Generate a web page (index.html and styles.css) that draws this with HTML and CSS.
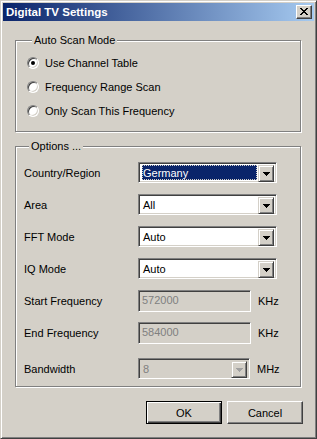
FILE: index.html
```html
<!DOCTYPE html>
<html lang="en">
<head>
    <meta charset="UTF-8">
    <title>Digital TV Settings</title>
    <link rel="stylesheet" href="styles.css">
</head>
<body>
    <div class="window">
        <div class="titlebar">
            <span class="title">Digital TV Settings</span>
            <button class="close" aria-label="Close">
                <svg width="8" height="7" viewBox="0 0 8 7"><path d="M0 0h2v1H0zM6 0h2v1H6zM1 1h2v1H1zM5 1h2v1H5zM2 2h4v1H2zM3 3h2v1H3zM2 4h4v1H2zM1 5h2v1H1zM5 5h2v1H5zM0 6h2v1H0zM6 6h2v1H6z" fill="#000"/></svg>
            </button>
        </div>

        <div class="content">
            <fieldset class="group scan">
                <legend>Auto Scan Mode</legend>
                <div class="radio-row"><span class="radio checked"></span>Use Channel Table</div>
                <div class="radio-row"><span class="radio"></span>Frequency Range Scan</div>
                <div class="radio-row"><span class="radio"></span>Only Scan This Frequency</div>
            </fieldset>

            <fieldset class="group options">
                <legend>Options ...</legend>
                <div class="row">
                    <span class="label">Country/Region</span>
                    <div class="combo">
                        <span class="value selected">Germany</span>
                        <span class="drop"><svg width="7" height="4" viewBox="0 0 7 4"><path d="M0 0h7v1H0zM1 1h5v1H1zM2 2h3v1H2zM3 3h1v1H3z"/></svg></span>
                    </div>
                </div>
                <div class="row">
                    <span class="label">Area</span>
                    <div class="combo">
                        <span class="value">All</span>
                        <span class="drop"><svg width="7" height="4" viewBox="0 0 7 4"><path d="M0 0h7v1H0zM1 1h5v1H1zM2 2h3v1H2zM3 3h1v1H3z"/></svg></span>
                    </div>
                </div>
                <div class="row">
                    <span class="label">FFT Mode</span>
                    <div class="combo">
                        <span class="value">Auto</span>
                        <span class="drop"><svg width="7" height="4" viewBox="0 0 7 4"><path d="M0 0h7v1H0zM1 1h5v1H1zM2 2h3v1H2zM3 3h1v1H3z"/></svg></span>
                    </div>
                </div>
                <div class="row">
                    <span class="label">IQ Mode</span>
                    <div class="combo">
                        <span class="value">Auto</span>
                        <span class="drop"><svg width="7" height="4" viewBox="0 0 7 4"><path d="M0 0h7v1H0zM1 1h5v1H1zM2 2h3v1H2zM3 3h1v1H3z"/></svg></span>
                    </div>
                </div>
                <div class="row">
                    <span class="label">Start Frequency</span>
                    <div class="textbox disabled">572000</div>
                    <span class="unit">KHz</span>
                </div>
                <div class="row">
                    <span class="label">End Frequency</span>
                    <div class="textbox disabled">584000</div>
                    <span class="unit">KHz</span>
                </div>
                <div class="row last">
                    <span class="label">Bandwidth</span>
                    <div class="combo small disabled">
                        <span class="value">8</span>
                        <span class="drop"><svg width="7" height="4" viewBox="0 0 7 4"><path d="M0 0h7v1H0zM1 1h5v1H1zM2 2h3v1H2zM3 3h1v1H3z"/></svg></span>
                    </div>
                    <span class="unit">MHz</span>
                </div>
            </fieldset>

            <div class="buttons">
                <button class="btn default">OK</button>
                <button class="btn">Cancel</button>
            </div>
        </div>
    </div>
</body>
</html>
```

FILE: styles.css
```css
body {
    margin: 0;
    padding: 0;
    background: #d4d0c8;
    font-family: "Liberation Sans", Arial, sans-serif;
    font-size: 11px;
    color: #000;
}

.window {
    width: 317px;
    height: 439px;
    box-sizing: border-box;
    background: #d4d0c8;
    border: 1px solid;
    border-color: #d4d0c8 #404040 #404040 #d4d0c8;
    box-shadow: inset 1px 1px #fff, inset -1px -1px #808080;
    padding: 2px;
}

.titlebar {
    height: 18px;
    display: flex;
    align-items: center;
    justify-content: space-between;
    padding: 0 2px 0 3px;
    background: linear-gradient(to right, #0a246a, #a6caf0);
}

.title {
    color: #fff;
    font-weight: bold;
    font-size: 11.5px;
}

.close {
    width: 16px;
    height: 14px;
    padding: 0;
    margin: 0;
    display: flex;
    align-items: center;
    justify-content: center;
    background: #d4d0c8;
    border: 1px solid;
    border-color: #fff #404040 #404040 #fff;
    box-shadow: inset -1px -1px #808080;
}

.close svg {
    margin: 0 1px 1px 0;
}

.content {
    padding: 0 13px 0 12px;
}

.group {
    margin: 13px 0 0 0;
    padding: 0;
    min-width: 0;
    border: 1px solid #808080;
    box-shadow: inset 1px 1px #fff, 1px 1px #fff;
}

.group legend {
    margin-left: 5px;
    padding: 0 2px;
    line-height: 13px;
    background: #d4d0c8;
}

/* radio group */

.scan {
    padding: 4px 0 8px 11px;
}

.radio-row {
    height: 24px;
    display: flex;
    align-items: center;
    gap: 6px;
}

.radio {
    width: 12px;
    height: 12px;
    box-sizing: border-box;
    border-radius: 50%;
    border: 1px solid;
    border-color: #808080 #fff #fff #808080;
    box-shadow: inset 1px 1px #404040, inset -1px -1px #d4d0c8;
    background: #fff;
    display: flex;
    align-items: center;
    justify-content: center;
}

.radio.checked::after {
    content: "";
    width: 4px;
    height: 4px;
    border-radius: 50%;
    background: #000;
}

/* options */

.options {
    margin-top: 8px;
    padding: 9px 0 7px 8px;
    display: flex;
    flex-direction: column;
    gap: 11px;
}

.row {
    height: 21px;
    display: flex;
    align-items: center;
}

.row.last {
    margin-top: 4px;
}

.label {
    width: 114px;
}

.combo {
    width: 139px;
    height: 21px;
    box-sizing: border-box;
    display: flex;
    padding: 2px;
    background: #fff;
    border: 1px solid;
    border-color: #808080 #fff #fff #808080;
    box-shadow: inset 1px 1px #404040, inset -1px -1px #d4d0c8;
}

.combo.small {
    width: 112px;
}

.combo .value {
    flex: 1;
    display: flex;
    align-items: center;
    padding-left: 2px;
}

.combo .value.selected {
    margin: 0 1px 0 1px;
    padding-left: 1px;
    background: #0a246a;
    color: #fff;
    outline: 1px dotted #d4d0c8;
    outline-offset: -1px;
}

.drop {
    width: 16px;
    height: 17px;
    box-sizing: border-box;
    display: flex;
    align-items: center;
    justify-content: center;
    background: #d4d0c8;
    border: 1px solid;
    border-color: #d4d0c8 #404040 #404040 #d4d0c8;
    box-shadow: inset 1px 1px #fff, inset -1px -1px #808080;
}

.drop svg {
    fill: #000;
}

.combo.disabled {
    background: #d4d0c8;
    color: #808080;
}

.combo.disabled .drop svg {
    fill: #a0a0a0;
}

.textbox {
    width: 113px;
    height: 22px;
    box-sizing: border-box;
    padding: 2px 3px;
    border: 1px solid;
    border-color: #808080 #fff #fff #808080;
    box-shadow: inset 1px 1px #404040, inset -1px -1px #d4d0c8;
    background: #fff;
    line-height: 14px;
}

.textbox.disabled {
    background: #d4d0c8;
    color: #808080;
}

.unit {
    margin-left: 7px;
}

/* dialog buttons */

.buttons {
    display: flex;
    justify-content: flex-end;
    gap: 5px;
    margin: 14px -2px 0 0;
}

.btn {
    width: 76px;
    height: 23px;
    box-sizing: border-box;
    padding: 0;
    font-family: inherit;
    font-size: 11px;
    color: #000;
    background: #d4d0c8;
    border: 1px solid;
    border-color: #fff #404040 #404040 #fff;
    box-shadow: inset -1px -1px #808080;
}

.btn.default {
    border-color: #000;
    box-shadow: inset 1px 1px #fff, inset -1px -1px #404040, inset -2px -2px #808080;
}
```
